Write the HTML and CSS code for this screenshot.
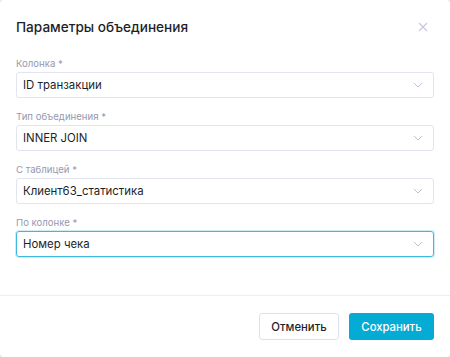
FILE: index.html
```html
<!DOCTYPE html>
<html lang="ru">
<head>
    <meta charset="UTF-8">
    <title>Параметры объединения</title>
    <link rel="stylesheet" href="styles.css">
</head>
<body>
    <div class="dialog">
        <div class="dialog-header">
            <h2 class="dialog-title">Параметры объединения</h2>
            <svg class="close-icon" width="10" height="10" viewBox="0 0 10 10">
                <path d="M1 1 L9 9 M9 1 L1 9" stroke="#c3c7e0" stroke-width="1.1" fill="none"/>
            </svg>
        </div>

        <div class="dialog-body">
            <div class="field">
                <div class="field-label">Колонка *</div>
                <div class="select">
                    <span>ID транзакции</span>
                    <svg class="chevron" width="10" height="6" viewBox="0 0 10 6"><path d="M1 1 L5 5 L9 1" stroke="#bcc0da" stroke-width="1" fill="none"/></svg>
                </div>
            </div>
            <div class="field">
                <div class="field-label">Тип объединения *</div>
                <div class="select">
                    <span>INNER JOIN</span>
                    <svg class="chevron" width="10" height="6" viewBox="0 0 10 6"><path d="M1 1 L5 5 L9 1" stroke="#bcc0da" stroke-width="1" fill="none"/></svg>
                </div>
            </div>
            <div class="field">
                <div class="field-label">С таблицей *</div>
                <div class="select">
                    <span>Клиент63_статистика</span>
                    <svg class="chevron" width="10" height="6" viewBox="0 0 10 6"><path d="M1 1 L5 5 L9 1" stroke="#bcc0da" stroke-width="1" fill="none"/></svg>
                </div>
            </div>
            <div class="field">
                <div class="field-label">По колонке *</div>
                <div class="select focused">
                    <span>Номер чека</span>
                    <svg class="chevron" width="10" height="6" viewBox="0 0 10 6"><path d="M1 1 L5 5 L9 1" stroke="#bcc0da" stroke-width="1" fill="none"/></svg>
                </div>
            </div>
        </div>

        <div class="dialog-footer">
            <button class="btn btn-cancel">Отменить</button>
            <button class="btn btn-save">Сохранить</button>
        </div>
    </div>
</body>
</html>
```

FILE: styles.css
```css
body {
    margin: 0;
    background: #e6e7ec;
    font-family: Inter, "Noto Sans", sans-serif;
}
.dialog {
    width: 450px;
    height: 357px;
    background: white;
    border-radius: 4px;
    box-sizing: border-box;
    display: flex;
    flex-direction: column;
}
.dialog-header {
    display: flex;
    align-items: center;
    justify-content: space-between;
    padding: 16px 22px 0 16px;
}
.dialog-title {
    margin: 0;
    font-size: 13.6px;
    line-height: 22px;
    font-weight: 500;
    color: #1d1f2b;
}
.close-icon {
    display: block;
}
.dialog-body {
    padding: 19px 16px 0 16px;
    flex: 1;
}
.field {
    margin-bottom: 12px;
}
.field-label {
    font-size: 9.6px;
    line-height: 13px;
    color: #9599b0;
    margin-bottom: 2px;
}
.select {
    height: 26px;
    box-sizing: border-box;
    border: 1px solid #e2e4ef;
    border-radius: 3px;
    display: flex;
    align-items: center;
    justify-content: space-between;
    padding: 0 10px 0 6px;
    font-size: 11.4px;
    color: #1d1f2b;
}
.select.focused {
    border-color: #3db8de;
    box-shadow: 0 0 0 1px rgba(61, 184, 222, 0.25);
}
.chevron {
    display: block;
}
.dialog-footer {
    border-top: 1px solid #eceef2;
    padding: 17px 16px 17px 16px;
    display: flex;
    justify-content: flex-end;
    gap: 10px;
}
.btn {
    height: 27px;
    border-radius: 3px;
    font-family: Inter, "Noto Sans", sans-serif;
    font-size: 11.3px;
    font-weight: 500;
    cursor: pointer;
    padding: 0;
}
.btn-cancel {
    width: 80px;
    background: white;
    border: 1px solid #dfe1ea;
    color: #1d1f2b;
}
.btn-save {
    width: 85px;
    background: #04acd5;
    border: none;
    color: white;
}
```
